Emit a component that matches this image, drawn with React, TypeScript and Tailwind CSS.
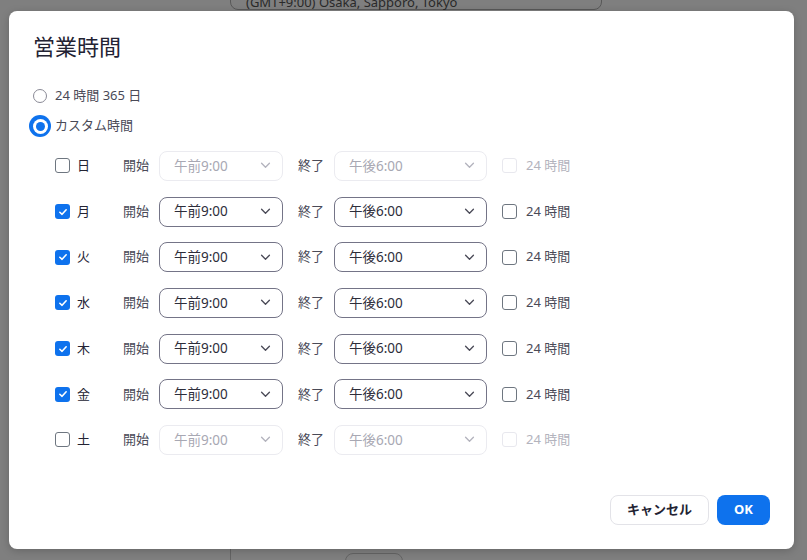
import React from 'react'

type Day = { label: string; on: boolean }

const days: Day[] = [
  { label: '日', on: false },
  { label: '月', on: true },
  { label: '火', on: true },
  { label: '水', on: true },
  { label: '木', on: true },
  { label: '金', on: true },
  { label: '土', on: false },
]

function Chevron({ muted }: { muted?: boolean }) {
  return (
    <svg viewBox="0 0 12 8" className="h-[7px] w-[11px]" fill="none">
      <path
        d="M1.5 1.5 6 6l4.5-4.5"
        stroke={muted ? '#b3b3bd' : '#4a4a57'}
        strokeWidth="1.5"
        strokeLinecap="round"
        strokeLinejoin="round"
      />
    </svg>
  )
}

function Checkbox({ checked, disabled }: { checked?: boolean; disabled?: boolean }) {
  if (checked) {
    return (
      <span className="flex h-[15px] w-[15px] shrink-0 items-center justify-center rounded-[3px] bg-[#0e72ed]">
        <svg viewBox="0 0 12 12" className="h-[10px] w-[10px]" fill="none">
          <path d="M2.2 6.3 4.9 8.8 9.8 3.4" stroke="#fff" strokeWidth="1.9" strokeLinecap="round" strokeLinejoin="round" />
        </svg>
      </span>
    )
  }
  return (
    <span
      className={
        disabled
          ? 'h-[15px] w-[15px] shrink-0 rounded-[3px] border border-[#e8e8ee] bg-white'
          : 'h-[15px] w-[15px] shrink-0 rounded-[3px] border border-[#6e7680] bg-white'
      }
    />
  )
}

function TimeSelect({ value, width, disabled }: { value: string; width: string; disabled?: boolean }) {
  return (
    <div
      className={
        (disabled
          ? 'border-[#ebebf0] text-[#a8a8b3] '
          : 'border-[#747487] text-[#2d2d3a] ') +
        width +
        ' flex h-[30px] shrink-0 items-center justify-between rounded-[8px] border pl-[14px] pr-[11px] text-[13.5px]'
      }
    >
      <span>{value}</span>
      <Chevron muted={disabled} />
    </div>
  )
}

function DayRow({ day }: { day: Day }) {
  const off = !day.on
  return (
    <div className="flex h-[45.7px] items-center pl-[22px] text-[13px]">
      <Checkbox checked={day.on} />
      <span className="ml-[7px] w-[46px] text-[#232333]">{day.label}</span>
      <span className="text-[#4a4a57]">開始</span>
      <div className="ml-[10px]">
        <TimeSelect value="午前9:00" width="w-[124px]" disabled={off} />
      </div>
      <span className="ml-[15px] text-[#4a4a57]">終了</span>
      <div className="ml-[10px]">
        <TimeSelect value="午後6:00" width="w-[153px]" disabled={off} />
      </div>
      <div className="ml-[15px] flex items-center gap-[9px]">
        <Checkbox disabled={off} />
        <span className={off ? 'text-[#b3b3bd]' : 'text-[#4a4a57]'}>24 時間</span>
      </div>
    </div>
  )
}

export default function App() {
  return (
    <div className="relative h-[560px] w-full overflow-hidden bg-white font-['Noto_Sans','Noto_Sans_CJK_JP',sans-serif]">
      {/* page behind the modal */}
      <div className="absolute left-[230px] top-[-16px] flex h-[26px] w-[372px] items-center justify-between rounded-[8px] border border-[#b0b0b0] px-[15px] text-[13px] leading-none text-[#555]">
        <span className="translate-y-[5px]">(GMT+9:00) Osaka, Sapporo, Tokyo</span>
        <Chevron />
      </div>
      <div className="absolute left-[230px] top-[549px] h-[20px] w-px bg-[#c8c8c8]" />
      <div className="absolute left-[345px] top-[553px] h-[30px] w-[58px] rounded-[8px] border border-[#c8c8c8]" />

      {/* backdrop */}
      <div className="absolute inset-0 bg-black/50" />

      {/* dialog */}
      <div className="absolute left-[9px] top-[11px] flex h-[538px] w-[785px] flex-col rounded-[8px] bg-white px-[24px] pb-[24px] pt-[20px] shadow-[0_2px_8px_rgba(0,0,0,0.2)]">
        <h2 className="text-[22px] leading-[30px] text-[#232333]">営業時間</h2>

        <div className="mt-[20px] flex h-[30px] items-center gap-[8px] text-[13px] text-[#4a4a57]">
          <span className="h-[14px] w-[14px] rounded-full border border-[#8a8a96]" />
          <span>24 時間 365 日</span>
        </div>
        <div className="flex h-[30px] items-center text-[13px] text-[#4a4a57]">
          <span className="-ml-[4px] mr-[4px] flex h-[22px] w-[22px] items-center justify-center rounded-full bg-[#0e72ed]">
            <span className="flex h-[15px] w-[15px] items-center justify-center rounded-full bg-white">
              <span className="h-[9px] w-[9px] rounded-full bg-[#0e72ed]" />
            </span>
          </span>
          <span>カスタム時間</span>
        </div>

        <div className="mt-[2px] flex flex-col">
          {days.map((d) => (
            <DayRow key={d.label} day={d} />
          ))}
        </div>

        <div className="mt-auto flex justify-end gap-[8px]">
          <button className="h-[30px] w-[99px] rounded-[8px] border border-[#e3e3e8] bg-white text-[13px] font-bold text-[#232333]">
            キャンセル
          </button>
          <button className="h-[30px] w-[53px] rounded-[8px] bg-[#0e72ed] text-[13px] font-bold text-white">
            OK
          </button>
        </div>
      </div>
    </div>
  )
}
